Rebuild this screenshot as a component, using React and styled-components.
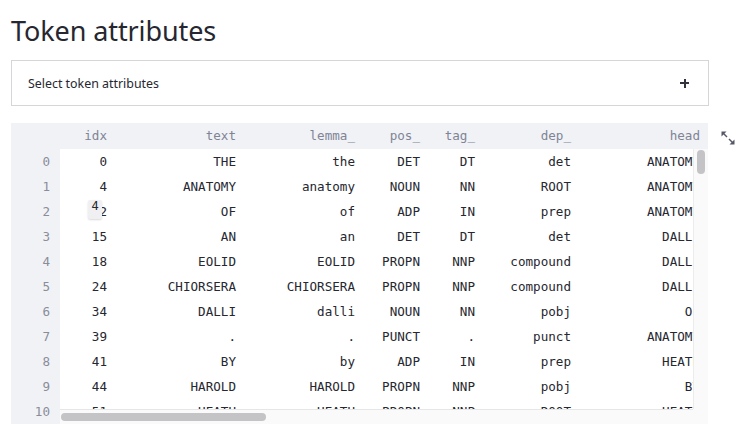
import React from 'react';
import styled, { createGlobalStyle } from 'styled-components';

const GlobalStyle = createGlobalStyle`
body {
  margin: 0;
  background: #fff;
  font-family: "Noto Sans", "Liberation Sans", sans-serif;
  color: #262730;
}
`;

const Page = styled.div`
width: 698px;
padding: 0 0 0 11px;
`;

const Title = styled.h2`
margin: 0;
padding: 13px 0 0;
font-size: 27px;
font-weight: 400;
line-height: 35px;
letter-spacing: -0.1px;
color: #262730;
`;

const Expander = styled.div`
margin-top: 12px;
height: 44px;
border: 1px solid #d6d6d9;
display: flex;
align-items: center;
justify-content: space-between;
padding: 0 19px 0 16px;
font-size: 12.4px;
color: #262730;
`;

const Plus = styled.span`
position: relative;
width: 9px;
height: 9px;
&::before, &::after {
  content: '';
  position: absolute;
  background: #31333f;
}
&::before { left: 0; top: 3.5px; width: 9px; height: 2px; }
&::after { left: 3.5px; top: 0; width: 2px; height: 9px; }
`;

const TableWrap = styled.div`
position: relative;
margin-top: 17px;
`;

const Frame = styled.div`
width: 697px;
height: 301px;
background: #f0f2f6;
display: grid;
grid-template-columns: 49px 1fr;
grid-template-rows: 26px 1fr;
font-family: "DejaVu Sans Mono", "Liberation Mono", monospace;
font-size: 12.6px;
overflow: hidden;
`;

const HeaderRow = styled.div`
display: flex;
overflow: hidden;
color: #808495;
`;

const Cell = styled.div`
flex: 0 0 ${p => p.$w}px;
padding: 0 8px;
box-sizing: border-box;
text-align: right;
white-space: nowrap;
overflow: visible;
line-height: ${p => p.$h || 25}px;
`;

const IndexCol = styled.div`
overflow: hidden;
color: #8a8d99;
`;

const IndexCell = styled.div`
height: 25px;
line-height: 25px;
text-align: right;
padding-right: 10px;
`;

const Body = styled.div`
display: grid;
grid-template-columns: 1fr 15px;
grid-template-rows: 1fr 15px;
min-height: 0;
`;

const Viewport = styled.div`
position: relative;
background: #fff;
overflow: hidden;
color: #262730;
`;

const Row = styled.div`
display: flex;
height: 25px;
`;

const VTrack = styled.div`
background: #fafafa;
border-left: 1px solid #ececec;
padding: 1px 0 0 3px;
`;

const HTrack = styled.div`
background: #fafafa;
border-top: 1px solid #e6e6e6;
padding: 3px 0 0 1px;
`;

const Corner = styled.div`
background: #fafafa;
`;

const Thumb = styled.div`
background: #c4c4c6;
border-radius: 4px;
width: ${p => p.$w}px;
height: ${p => p.$h}px;
`;

const Tip = styled.div`
position: absolute;
left: 28px;
top: 51px;
width: 14px;
height: 19px;
background: #f0f0f2;
box-shadow: 0 1px 2px rgba(0,0,0,0.15);
border-radius: 2px;
font-size: 12px;
line-height: 13px;
text-align: center;
color: #262730;
`;

const FullscreenBtn = styled.button`
position: absolute;
right: -26px;
top: 8px;
width: 14px;
height: 14px;
padding: 0;
border: none;
background: transparent;
display: block;
`;

const columns = [
  { key: 'idx', w: 55 },
  { key: 'text', w: 129 },
  { key: 'lemma_', w: 119 },
  { key: 'pos_', w: 65 },
  { key: 'tag_', w: 55 },
  { key: 'dep_', w: 96 },
  { key: 'head', w: 129 },
  { key: 'ent_type_', w: 100 },
];

const rows = [
  [0, 'THE', 'the', 'DET', 'DT', 'det', 'ANATOMY', ''],
  [4, 'ANATOMY', 'anatomy', 'NOUN', 'NN', 'ROOT', 'ANATOMY', ''],
  [12, 'OF', 'of', 'ADP', 'IN', 'prep', 'ANATOMY', ''],
  [15, 'AN', 'an', 'DET', 'DT', 'det', 'DALLI', ''],
  [18, 'EOLID', 'EOLID', 'PROPN', 'NNP', 'compound', 'DALLI', ''],
  [24, 'CHIORSERA', 'CHIORSERA', 'PROPN', 'NNP', 'compound', 'DALLI', ''],
  [34, 'DALLI', 'dalli', 'NOUN', 'NN', 'pobj', 'OF', ''],
  [39, '.', '.', 'PUNCT', '.', 'punct', 'ANATOMY', ''],
  [41, 'BY', 'by', 'ADP', 'IN', 'prep', 'HEATH', ''],
  [44, 'HAROLD', 'HAROLD', 'PROPN', 'NNP', 'pobj', 'BY', ''],
  [51, 'HEATH', 'HEATH', 'PROPN', 'NNP', 'ROOT', 'HEATH', ''],
];

const ExpandIcon = () => (
  <svg width="14" height="14" viewBox="0 0 14 14" style={{ display: 'block' }}>
    <path d="M0.5 0.5h5L0.5 5.5z" fill="#555867" />
    <path d="M2 2l4 4" stroke="#555867" strokeWidth="1.5" />
    <path d="M13.5 13.5h-5l5-5z" fill="#555867" />
    <path d="M12 12l-4-4" stroke="#555867" strokeWidth="1.5" />
  </svg>
);

export default function App() {
  return (
    <Page>
      <GlobalStyle />
      <Title>Token attributes</Title>
      <Expander>
        <span>Select token attributes</span>
        <Plus />
      </Expander>
      <TableWrap>
        <Frame>
          <div />
          <HeaderRow>
            {columns.map(c => (
              <Cell key={c.key} $w={c.w} $h={26}>{c.key}</Cell>
            ))}
          </HeaderRow>
          <IndexCol>
            {rows.map((r, i) => (
              <IndexCell key={i}>{i}</IndexCell>
            ))}
          </IndexCol>
          <Body>
            <Viewport>
              {rows.map((r, i) => (
                <Row key={i}>
                  {r.map((v, j) => (
                    <Cell key={j} $w={columns[j].w}>{v}</Cell>
                  ))}
                </Row>
              ))}
              <Tip>4</Tip>
            </Viewport>
            <VTrack>
              <Thumb $w={8} $h={24} />
            </VTrack>
            <HTrack>
              <Thumb $w={205} $h={8} />
            </HTrack>
            <Corner />
          </Body>
        </Frame>
        <FullscreenBtn>
          <ExpandIcon />
        </FullscreenBtn>
      </TableWrap>
    </Page>
  );
}
